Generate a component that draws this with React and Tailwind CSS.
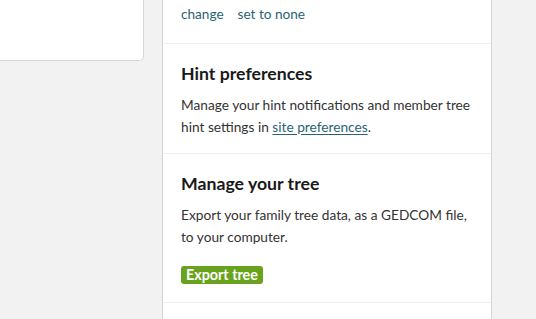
export default function App() {
  const font = { fontFamily: "Lato, 'Noto Sans', sans-serif" };
  return (
    <div className="w-[536px] h-[319px] overflow-hidden bg-[#f2f2f2] flex items-start" style={font}>
      <div className="w-[144px] h-[61px] shrink-0 bg-white border border-t-0 border-l-0 border-[#d8d8d8] rounded-br-[5px]" />
      <div className="ml-[18px] w-[330px] shrink-0 h-[319px] bg-white border-x border-[#d4d4d4] flex flex-col">
        <div className="px-[18px] pt-[3px] pb-[18px] flex gap-[14px] text-[13.6px] leading-[22px] text-[#2a6373]">
          <a>change</a>
          <a>set to none</a>
        </div>
        <div className="border-t border-[#efefef] px-[18px] pt-[19px] pb-[16px]">
          <h2 className="text-[17.7px] leading-[22px] font-bold text-[#1a1a1a]">Hint preferences</h2>
          <div className="mt-[9px] text-[13.7px] leading-[21.5px] text-[#333]">
            <p>Manage your hint notifications and member tree</p>
            <p>
              <span>hint settings in </span>
              <a className="underline underline-offset-2 text-[#2a6373]">site preferences</a>
              <span>.</span>
            </p>
          </div>
        </div>
        <div className="border-t border-[#efefef] px-[18px] pt-[19px] pb-[18px]">
          <h2 className="text-[17.7px] leading-[22px] font-bold text-[#1a1a1a]">Manage your tree</h2>
          <div className="mt-[9px] text-[13.7px] leading-[21.5px] text-[#333]">
            <p>Export your family tree data, as a GEDCOM file,</p>
            <p>to your computer.</p>
          </div>
          <button className="mt-[19px] block h-[18px] px-[5px] rounded-[3px] bg-[#69a31e] text-white font-bold text-[14.3px] leading-[18px]">
            Export tree
          </button>
        </div>
        <div className="border-t border-[#efefef]" />
      </div>
    </div>
  );
}
